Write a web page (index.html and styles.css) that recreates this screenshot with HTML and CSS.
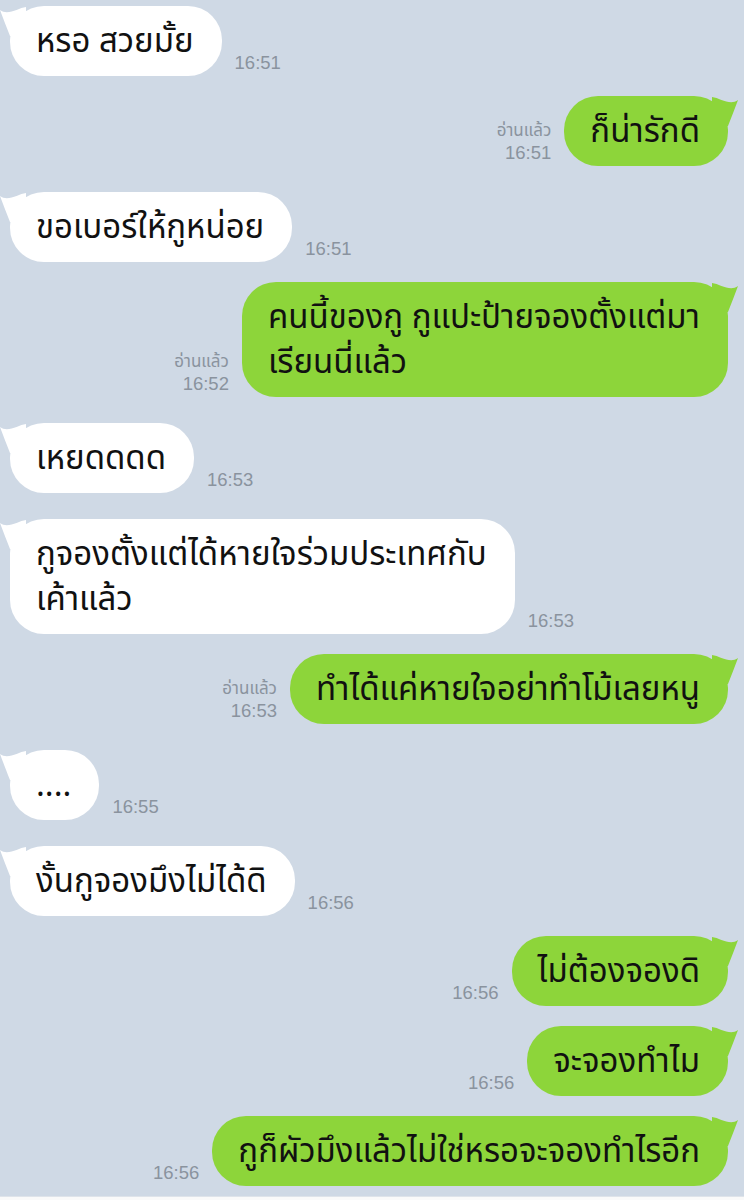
FILE: index.html
```html
<!DOCTYPE html>
<html lang="th">

<head>
    <meta charset="UTF-8">
    <meta name="viewport" content="width=device-width, initial-scale=1.0">
    <title>แชท</title>
    <link rel="stylesheet" href="styles.css">
</head>

<body>
    <div class="chat">
        <!-- ข้อความเข้า -->
        <div class="row in">
            <div class="bubble">
                <svg class="tail" viewBox="0 0 26 30"><path d="M26 1 C18 2 8 10 0 4 C3 12 6 20 10 30 L26 30 Z" /></svg>
                หรอ สวยมั้ย
            </div>
            <div class="meta"><span class="time">16:51</span></div>
        </div>

        <div class="row out">
            <div class="meta"><span class="read">อ่านแล้ว</span><span class="time">16:51</span></div>
            <div class="bubble">
                <svg class="tail" viewBox="0 0 26 30"><path d="M0 1 C8 2 18 10 26 4 C23 12 20 20 16 30 L0 30 Z" /></svg>
                ก็น่ารักดี
            </div>
        </div>

        <div class="row in">
            <div class="bubble">
                <svg class="tail" viewBox="0 0 26 30"><path d="M26 1 C18 2 8 10 0 4 C3 12 6 20 10 30 L26 30 Z" /></svg>
                ขอเบอร์ให้กูหน่อย
            </div>
            <div class="meta"><span class="time">16:51</span></div>
        </div>

        <div class="row out">
            <div class="meta"><span class="read">อ่านแล้ว</span><span class="time">16:52</span></div>
            <div class="bubble">
                <svg class="tail" viewBox="0 0 26 30"><path d="M0 1 C8 2 18 10 26 4 C23 12 20 20 16 30 L0 30 Z" /></svg>
                คนนี้ของกู กูแปะป้ายจองตั้งแต่มา<br>เรียนนี่แล้ว
            </div>
        </div>

        <div class="row in">
            <div class="bubble">
                <svg class="tail" viewBox="0 0 26 30"><path d="M26 1 C18 2 8 10 0 4 C3 12 6 20 10 30 L26 30 Z" /></svg>
                เหยดดดด
            </div>
            <div class="meta"><span class="time">16:53</span></div>
        </div>

        <div class="row in">
            <div class="bubble">
                <svg class="tail" viewBox="0 0 26 30"><path d="M26 1 C18 2 8 10 0 4 C3 12 6 20 10 30 L26 30 Z" /></svg>
                กูจองตั้งแต่ได้หายใจร่วมประเทศกับ<br>เค้าแล้ว
            </div>
            <div class="meta"><span class="time">16:53</span></div>
        </div>

        <div class="row out">
            <div class="meta"><span class="read">อ่านแล้ว</span><span class="time">16:53</span></div>
            <div class="bubble">
                <svg class="tail" viewBox="0 0 26 30"><path d="M0 1 C8 2 18 10 26 4 C23 12 20 20 16 30 L0 30 Z" /></svg>
                ทำได้แค่หายใจอย่าทำโม้เลยหนู
            </div>
        </div>

        <div class="row in">
            <div class="bubble">
                <svg class="tail" viewBox="0 0 26 30"><path d="M26 1 C18 2 8 10 0 4 C3 12 6 20 10 30 L26 30 Z" /></svg>
                ....
            </div>
            <div class="meta"><span class="time">16:55</span></div>
        </div>

        <div class="row in">
            <div class="bubble">
                <svg class="tail" viewBox="0 0 26 30"><path d="M26 1 C18 2 8 10 0 4 C3 12 6 20 10 30 L26 30 Z" /></svg>
                งั้นกูจองมึงไม่ได้ดิ
            </div>
            <div class="meta"><span class="time">16:56</span></div>
        </div>

        <div class="row out">
            <div class="meta"><span class="time">16:56</span></div>
            <div class="bubble">
                <svg class="tail" viewBox="0 0 26 30"><path d="M0 1 C8 2 18 10 26 4 C23 12 20 20 16 30 L0 30 Z" /></svg>
                ไม่ต้องจองดิ
            </div>
        </div>

        <div class="row out">
            <div class="meta"><span class="time">16:56</span></div>
            <div class="bubble">
                <svg class="tail" viewBox="0 0 26 30"><path d="M0 1 C8 2 18 10 26 4 C23 12 20 20 16 30 L0 30 Z" /></svg>
                จะจองทำไม
            </div>
        </div>

        <div class="row out">
            <div class="meta"><span class="time">16:56</span></div>
            <div class="bubble">
                <svg class="tail" viewBox="0 0 26 30"><path d="M0 1 C8 2 18 10 26 4 C23 12 20 20 16 30 L0 30 Z" /></svg>
                กูก็ผัวมึงแล้วไม่ใช่หรอจะจองทำไรอีก
            </div>
        </div>
    </div>
    <div class="footer"></div>
</body>

</html>
```
FILE: styles.css
```css
* {
    margin: 0;
    padding: 0;
    box-sizing: border-box;
}

body {
    width: 744px;
    height: 1200px;
    overflow: hidden;
    background: #cfd9e5;
    font-family: "Noto Sans Thai", "Noto Sans", "Liberation Sans", sans-serif;
    display: flex;
    flex-direction: column;
}

.chat {
    flex: 1;
    padding: 0 16px 0 10px;
    display: flex;
    flex-direction: column;
}

.row {
    display: flex;
    align-items: flex-end;
}

.row.in {
    justify-content: flex-start;
    margin-top: 26px;
}

.row.in:first-child {
    margin-top: 6px;
}

.row.out {
    justify-content: flex-end;
    margin-top: 20px;
}

.bubble {
    position: relative;
    padding: 14px 28px 11px 26px;
    border-radius: 34px;
    font-size: 33px;
    font-weight: 420;
    line-height: 45px;
    color: #111;
    white-space: nowrap;
}

.in .bubble {
    background: #ffffff;
}

.out .bubble {
    background: #8dd53a;
}

.tail {
    position: absolute;
    top: 0;
    width: 26px;
    height: 30px;
}

.in .tail {
    left: -10px;
    fill: #ffffff;
}

.out .tail {
    right: -10px;
    fill: #8dd53a;
}

.meta {
    display: flex;
    flex-direction: column;
    padding-bottom: 2px;
    color: #8a939e;
    font-family: "Liberation Sans", "Noto Sans Thai", sans-serif;
}

.in .meta {
    margin-left: 13px;
    align-items: flex-start;
}

.out .meta {
    margin-right: 13px;
    align-items: flex-end;
}

.time {
    font-size: 18.5px;
    line-height: 22px;
}

.read {
    font-family: "Noto Sans Thai", "Liberation Sans", sans-serif;
    font-size: 17px;
    line-height: 22px;
}

.footer {
    height: 4px;
    border-top: 1px solid #dfe4ea;
    background: #fafafa;
}
```
